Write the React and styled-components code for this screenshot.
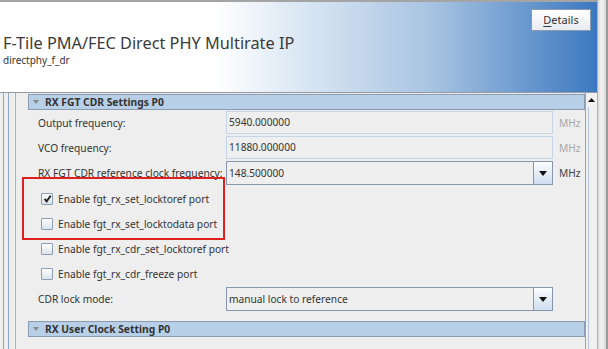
import React from 'react';
import styled, {createGlobalStyle} from 'styled-components';

const GlobalStyle = createGlobalStyle`
  html, body {
    margin: 0;
    padding: 0;
    background: #eeeeee;
    overflow: hidden;
  }
  body {
    font-family: 'Noto Sans', 'Open Sans', sans-serif;
    color: #333;
  }
`;

const App = () => {
  return (
    <>
      <GlobalStyle />
      <Window>
        <Main>
          <Header>
            <TitleBlock>
              <Title>F-Tile PMA/FEC Direct PHY Multirate IP</Title>
              <Subtitle>directphy_f_dr</Subtitle>
            </TitleBlock>
            <DetailsButton>
              <u>D</u>etails
            </DetailsButton>
          </Header>
          <Body>
            <OuterFrame>
              <InnerFrame>
                <Content>
                  <SectionHeader>
                    <Caret />
                    RX FGT CDR Settings P0
                  </SectionHeader>
                  <Rows>
                    <FieldRow height={25}>
                      <Label>Output frequency:</Label>
                      <TextField disabled>5940.000000</TextField>
                      <Unit disabled>MHz</Unit>
                    </FieldRow>
                    <FieldRow height={25}>
                      <Label>VCO frequency:</Label>
                      <TextField disabled>11880.000000</TextField>
                      <Unit disabled>MHz</Unit>
                    </FieldRow>
                    <FieldRow height={26}>
                      <Label>RX FGT CDR reference clock frequency:</Label>
                      <Combo value='148.500000' />
                      <Unit>MHz</Unit>
                    </FieldRow>
                    <CheckRow label='Enable fgt_rx_set_locktoref port' checked />
                    <CheckRow label='Enable fgt_rx_set_locktodata port' />
                    <CheckRow label='Enable fgt_rx_cdr_set_locktoref port' />
                    <CheckRow label='Enable fgt_rx_cdr_freeze port' />
                    <FieldRow height={26}>
                      <Label>CDR lock mode:</Label>
                      <Combo value='manual lock to reference' />
                      <Unit />
                    </FieldRow>
                    <Highlight />
                  </Rows>
                  <SectionHeader spaced>
                    <Caret />
                    RX User Clock Setting P0
                  </SectionHeader>
                </Content>
              </InnerFrame>
            </OuterFrame>
            <ScrollBar>
              <ScrollArrow>
                <svg width='7' height='4' viewBox='0 0 7 4'>
                  <path d='M0 4 L3.5 0 L7 4 Z' fill='#111' />
                </svg>
              </ScrollArrow>
              <ScrollTrack />
            </ScrollBar>
          </Body>
        </Main>
        <EdgeStrip />
      </Window>
    </>
  );
};

const Combo = ({value}) => (
  <ComboBox>
    <ComboValue>{value}</ComboValue>
    <ComboButton>
      <svg width='8' height='5' viewBox='0 0 8 5'>
        <path d='M0 0 L8 0 L4 5 Z' fill='#111' />
      </svg>
    </ComboButton>
  </ComboBox>
);

const CheckRow = ({label, checked}) => (
  <CheckLine>
    <CheckBox>
      {checked && (
        <svg width='9' height='9' viewBox='0 0 10 10'>
          <path d='M1.8 5.4 L4 8.2 L8.6 1.8' stroke='#222' strokeWidth='2' fill='none' />
        </svg>
      )}
    </CheckBox>
    <CheckLabel>{label}</CheckLabel>
  </CheckLine>
);

export default App;

const Window = styled.div`
  width: 608px;
  height: 349px;
  display: flex;
  overflow: hidden;
`;

const Main = styled.div`
  width: 597px;
  display: flex;
  flex-direction: column;
`;

const EdgeStrip = styled.div`
  width: 11px;
  box-sizing: border-box;
  border-left: 1px solid #a9b3c0;
  border-right: 2px solid #9a9a9a;
  background: linear-gradient(to right, #dcdcdc, #f4f4f4 50%, #d6d6d6);
`;

const Header = styled.div`
  height: 93px;
  box-sizing: border-box;
  border-top: 2px solid #a4a4a4;
  border-bottom: 1px solid #8f9aa6;
  background: linear-gradient(to right, #ffffff 0%, #ffffff 36%, #d9e6f3 51%, #a9c4e2 72%, #3b78c0 100%);
  display: flex;
  justify-content: space-between;
  align-items: flex-start;
  padding: 7px 6px 0 3px;
`;

const TitleBlock = styled.div`
  padding-top: 24px;
  display: flex;
  flex-direction: column;
`;

const Title = styled.div`
  font-family: 'Noto Sans', sans-serif;
  font-size: 16.3px;
  line-height: 20px;
  color: #3a3a3a;
`;

const Subtitle = styled.div`
  font-size: 10px;
  line-height: 14px;
  color: #333;
`;

const DetailsButton = styled.div`
  width: 60px;
  height: 22px;
  box-sizing: border-box;
  border: 1px solid #8c9cb0;
  background: linear-gradient(to bottom, #ffffff, #e6ebf1);
  font-size: 11px;
  line-height: 20px;
  text-align: center;
  color: #333;
  u {
    text-decoration-thickness: 1px;
    text-underline-offset: 2px;
  }
`;

const Body = styled.div`
  flex: 1;
  display: flex;
  background: #eeeeee;
  min-height: 0;
`;

const OuterFrame = styled.div`
  flex: 1;
  margin-left: 3px;
  border-left: 1px solid #8ea6c8;
  padding-left: 4px;
  display: flex;
`;

const InnerFrame = styled.div`
  flex: 1;
  border-left: 1px solid #8ea6c8;
  padding-left: 6px;
  display: flex;
  position: relative;
  &::before {
    content: '';
    position: absolute;
    left: 6px;
    top: 0;
    bottom: 0;
    border-left: 1px solid #9fb4d0;
  }
`;

const Content = styled.div`
  flex: 1;
  padding: 1px 0 0 13px;
  display: flex;
  flex-direction: column;
`;

const SectionHeader = styled.div`
  height: 16px;
  box-sizing: border-box;
  margin-top: ${p => (p.spaced ? '9px' : '0')};
  border: 1px solid #8b9aae;
  background: #b8cfe8;
  display: flex;
  align-items: center;
  padding-left: 4px;
  font-size: 10.3px;
  font-weight: bold;
  color: #333;
  white-space: nowrap;
`;

const Caret = styled.span`
  width: 0;
  height: 0;
  border-left: 3px solid transparent;
  border-right: 3px solid transparent;
  border-top: 4px solid #8a8a8a;
  margin-right: 6px;
`;

const Rows = styled.div`
  position: relative;
  padding: 0 0 0 10px;
  display: flex;
  flex-direction: column;
`;

const FieldRow = styled.div`
  height: ${p => p.height}px;
  display: flex;
  align-items: center;
`;

const Label = styled.div`
  width: 188px;
  font-size: 10.2px;
  color: #333;
  white-space: nowrap;
`;

const TextField = styled.div`
  width: 327px;
  height: 23px;
  box-sizing: border-box;
  border: 1px solid ${p => (p.disabled ? '#c4d5e8' : '#8797ad')};
  background: #efefef;
  font-size: 10.2px;
  line-height: 21px;
  padding-left: 2px;
  color: #333;
`;

const ComboBox = styled.div`
  width: 327px;
  height: 24px;
  box-sizing: border-box;
  border: 1px solid #8797ad;
  background: #efefef;
  display: flex;
`;

const ComboValue = styled.div`
  flex: 1;
  font-size: 10.2px;
  line-height: 22px;
  padding-left: 2px;
  color: #333;
`;

const ComboButton = styled.div`
  width: 18px;
  border-left: 1px solid #8797ad;
  background: linear-gradient(to bottom, #fbfdff, #cfdef0);
  display: flex;
  align-items: center;
  justify-content: center;
`;

const Unit = styled.div`
  width: 26px;
  margin-left: 6px;
  font-size: 10.2px;
  color: ${p => (p.disabled ? '#a9a9a9' : '#444')};
`;

const CheckLine = styled.div`
  height: 25px;
  display: flex;
  align-items: center;
  padding-left: 3px;
`;

const CheckBox = styled.div`
  width: 12px;
  height: 12px;
  box-sizing: border-box;
  border: 1px solid #8d9db3;
  border-radius: 1px;
  background: linear-gradient(to bottom, #ffffff, #d9e2ec);
  display: flex;
  align-items: center;
  justify-content: center;
  margin-right: 5px;
`;

const CheckLabel = styled.div`
  font-size: 10.2px;
  color: #333;
  white-space: nowrap;
`;

const Highlight = styled.div`
  position: absolute;
  left: -6px;
  top: 67px;
  width: 203px;
  height: 63px;
  box-sizing: border-box;
  border: 2px solid #e0201e;
  pointer-events: none;
`;

const ScrollBar = styled.div`
  width: 15px;
  box-sizing: border-box;
  border-left: 1px solid #8ea6c8;
  display: flex;
  flex-direction: column;
`;

const ScrollArrow = styled.div`
  height: 14px;
  display: flex;
  align-items: center;
  justify-content: center;
  background: #f1f1f1;
`;

const ScrollTrack = styled.div`
  flex: 1;
  margin-left: 2px;
  border-left: 1px solid #b9c8da;
  background: #f0f0f0;
`;
